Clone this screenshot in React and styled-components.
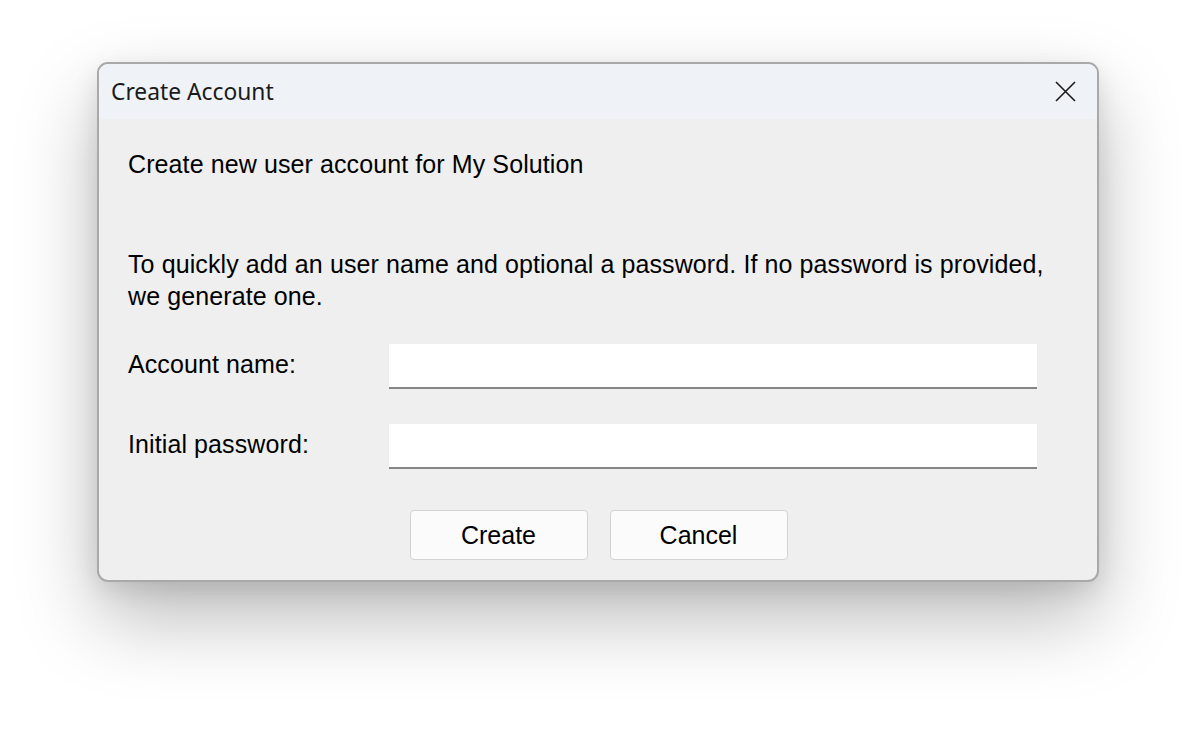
import React from 'react';
import styled, { createGlobalStyle } from 'styled-components';

const GlobalStyle = createGlobalStyle`
  html, body {
    margin: 0;
    padding: 0;
    background: #ffffff;
  }
  body {
    font-family: "Liberation Sans", Arial, sans-serif;
  }
`;

const Page = styled.div`
  width: 1195px;
  height: 742px;
  padding: 62px 0 0 97px;
  box-sizing: border-box;
`;

const Window = styled.div`
  width: 1002px;
  height: 520px;
  box-sizing: border-box;
  border: 2px solid #a9a9a9;
  border-radius: 11px;
  background: #efefef;
  overflow: hidden;
  display: flex;
  flex-direction: column;
  box-shadow: 0 36px 80px rgba(0, 0, 0, 0.27), 0 8px 24px rgba(0, 0, 0, 0.1);
`;

const TitleBar = styled.div`
  height: 55px;
  flex-shrink: 0;
  display: flex;
  align-items: center;
  justify-content: space-between;
  padding: 0 14px 0 12px;
  background: #eff2f7;
`;

const Title = styled.span`
  font-family: "Noto Sans", "Open Sans", sans-serif;
  font-size: 22.8px;
  color: #1a1a1a;
`;

const CloseButton = styled.button`
  width: 36px;
  height: 36px;
  border: none;
  background: transparent;
  padding: 0;
  display: flex;
  align-items: center;
  justify-content: center;
  color: #1a1a1a;
`;

const Body = styled.div`
  flex: 1;
  padding: 30px 28px 0 29px;
  display: flex;
  flex-direction: column;
  color: #000;
  font-size: 25px;
  letter-spacing: 0.1px;
`;

const Heading = styled.p`
  margin: 0;
  line-height: 30px;
`;

const Description = styled.p`
  margin: 69px 0 0;
  line-height: 32px;
`;

const Form = styled.div`
  margin-top: 32px;
  display: flex;
  flex-direction: column;
  gap: 35px;
`;

const Row = styled.div`
  display: flex;
  align-items: center;
`;

const Label = styled.label`
  width: 261px;
  flex-shrink: 0;
  padding-bottom: 4px;
`;

const Input = styled.input`
  width: 648px;
  height: 45px;
  box-sizing: border-box;
  border: none;
  border-bottom: 2px solid #868686;
  background: #ffffff;
  font-size: 22px;
  font-family: inherit;
  padding: 0 8px;
  outline: none;
`;

const Buttons = styled.div`
  margin-top: 41px;
  display: flex;
  justify-content: center;
  gap: 22px;
`;

const Button = styled.button`
  width: 178px;
  height: 50px;
  box-sizing: border-box;
  border: 1px solid #d3d3d3;
  border-radius: 4px;
  background: #fbfbfb;
  font-family: "Liberation Sans", Arial, sans-serif;
  font-size: 25px;
  color: #000;
`;

export default function App() {
  return (
    <>
      <GlobalStyle />
      <Page>
        <Window>
          <TitleBar>
            <Title>Create Account</Title>
            <CloseButton aria-label="Close">
              <svg width="21" height="21" viewBox="0 0 21 21">
                <path d="M1 1 L20 20 M20 1 L1 20" stroke="currentColor" strokeWidth="1.6" fill="none" />
              </svg>
            </CloseButton>
          </TitleBar>
          <Body>
            <Heading>Create new user account for My Solution</Heading>
            <Description>
              To quickly add an user name and optional a password. If no password is provided, we generate one.
            </Description>
            <Form>
              <Row>
                <Label>Account name:</Label>
                <Input type="text" />
              </Row>
              <Row>
                <Label>Initial password:</Label>
                <Input type="password" />
              </Row>
            </Form>
            <Buttons>
              <Button>Create</Button>
              <Button>Cancel</Button>
            </Buttons>
          </Body>
        </Window>
      </Page>
    </>
  );
}
